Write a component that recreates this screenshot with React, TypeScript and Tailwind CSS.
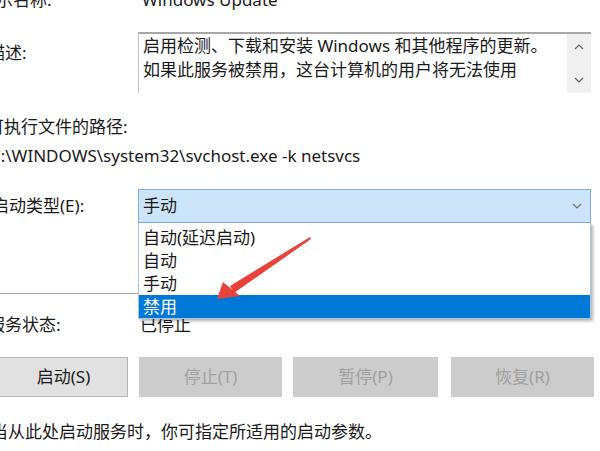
import React from "react";

const Chevron = ({ up = false, color = "#606060" }: { up?: boolean; color?: string }) => (
  <svg width="10" height="6" viewBox="0 0 10 6" className="block">
    <polyline
      points={up ? "1,5 5,1 9,5" : "1,1 5,5 9,1"}
      fill="none"
      stroke={color}
      strokeWidth="1.2"
    />
  </svg>
);

export default function App() {
  return (
    <div
      className="w-[600px] h-[451px] overflow-hidden bg-white relative text-[17px] text-[#1a1a1a]"
      style={{ fontFamily: '"Noto Sans", "Noto Sans CJK SC", sans-serif' }}
    >
      <div className="flex flex-col">
        {/* 显示名称 */}
        <div className="flex h-[20px] mt-[-10px] items-center leading-[20px]">
          <div className="w-[138px] shrink-0">
            <span className="ml-[-21px] whitespace-nowrap block">显示名称:</span>
          </div>
          <div className="pl-[4px] whitespace-nowrap">Windows Update</div>
        </div>

        {/* 描述 */}
        <div className="flex mt-[22px]">
          <div className="w-[138px] shrink-0 pt-[11px] leading-[20px]">
            <span className="ml-[-12px] whitespace-nowrap block">描述:</span>
          </div>
          <div className="w-[453px] h-[61px] flex border-t-2 border-l border-t-[#a8a8a8] border-l-[#c4c4c4]">
            <div className="flex-1 pl-[4px] pt-0 leading-[24px] whitespace-nowrap">
              <div>启用检测、下载和安装 Windows 和其他程序的更新。</div>
              <div>如果此服务被禁用，这台计算机的用户将无法使用</div>
            </div>
            <div className="w-[24px] h-full bg-[#f0f0f0] flex flex-col items-center justify-between pt-[10px] pb-[10px]">
              <Chevron up />
              <Chevron />
            </div>
          </div>
        </div>

        {/* 可执行文件的路径 */}
        <div className="mt-[24px] h-[20px] leading-[20px]">
          <span className="ml-[-13px] whitespace-nowrap block">可执行文件的路径:</span>
        </div>
        <div className="mt-[9px] h-[20px] leading-[20px]">
          <span className="ml-[-10px] whitespace-nowrap block">C:\WINDOWS\system32\svchost.exe -k netsvcs</span>
        </div>

        {/* 启动类型 */}
        <div className="flex mt-[23px] h-[34px] items-center">
          <div className="w-[138px] shrink-0 leading-[20px]">
            <span className="ml-[-8px] whitespace-nowrap block">启动类型(E):</span>
          </div>
          <div className="w-[453px] h-[34px] bg-[#cce4f7] border border-[#7fb0e0] flex items-center justify-between pl-[4px] pr-[8px]">
            <span className="leading-[20px]">手动</span>
            <Chevron color="#707070" />
          </div>
        </div>

        {/* separator */}
        <div className="mt-[70px] h-px w-[150px] bg-[#a8a8a8]" />

        {/* 服务状态 */}
        <div className="flex mt-[21px] h-[20px] leading-[20px]">
          <div className="w-[138px] shrink-0">
            <span className="ml-[-12px] whitespace-nowrap block">服务状态:</span>
          </div>
          <div className="pl-[2px]">已停止</div>
        </div>

        {/* buttons */}
        <div className="flex mt-[22px] h-[40px]">
          <div className="ml-[-1px] w-[129px] h-full bg-[#e1e1e1] border border-[#b4b4b4] flex items-center justify-center">
            启动(S)
          </div>
          <div className="ml-[11px] w-[143px] h-full bg-[#cccccc] text-[#a0a0a0] flex items-center justify-center">
            停止(T)
          </div>
          <div className="ml-[11px] w-[145px] h-full bg-[#cccccc] text-[#a0a0a0] flex items-center justify-center">
            暂停(P)
          </div>
          <div className="ml-[13px] w-[143px] h-full bg-[#cccccc] text-[#a0a0a0] flex items-center justify-center">
            恢复(R)
          </div>
        </div>

        {/* bottom text */}
        <div className="mt-[25px] h-[20px] leading-[20px]">
          <span className="ml-[-9px] whitespace-nowrap block">当从此处启动服务时，你可指定所适用的启动参数。</span>
        </div>
      </div>

      {/* dropdown list overlay */}
      <div className="absolute left-[138px] top-[223px] w-[453px] bg-white border-x border-b border-[#a9c4df] pt-[3px] shadow-[2px_2px_3px_rgba(0,0,0,0.3)]">
        <div className="h-[23px] leading-[23px] pl-[4px]">自动(延迟启动)</div>
        <div className="h-[23px] leading-[23px] pl-[4px]">自动</div>
        <div className="h-[23px] leading-[23px] pl-[4px]">手动</div>
        <div className="h-[23px] leading-[23px] pl-[4px] bg-[#0078d7] text-white">禁用</div>
      </div>

      {/* red arrow annotation */}
      <svg className="absolute left-0 top-0 pointer-events-none" width="600" height="451" viewBox="0 0 600 451">
        <polygon points="310,237 311,239 234,293 230,286" fill="#e8433b" />
        <polygon points="217,299 223,282 240,296" fill="#e8433b" />
      </svg>
    </div>
  );
}
